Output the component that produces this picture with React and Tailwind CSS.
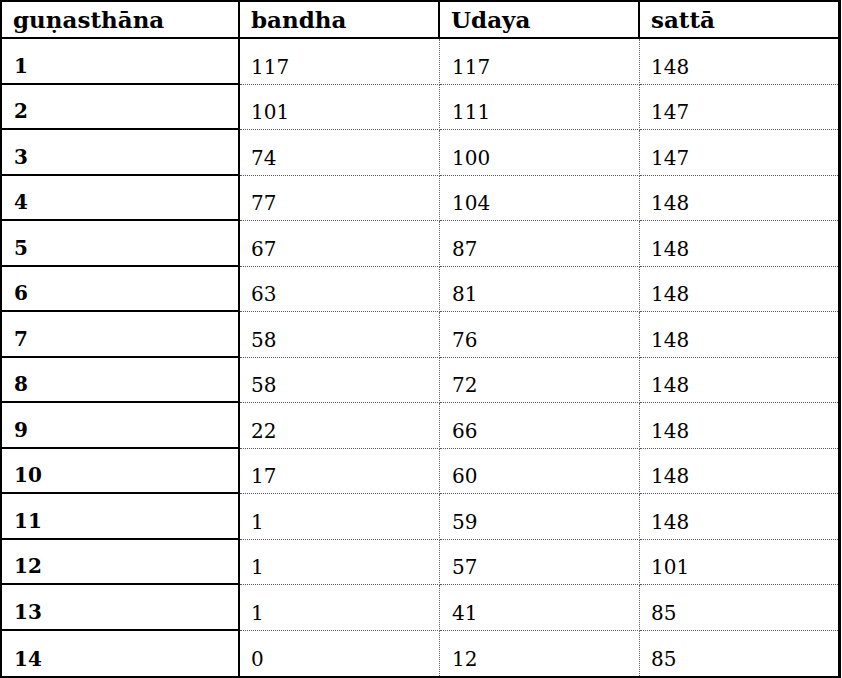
import React from "react";

const rows = [
  ["1", "117", "117", "148"],
  ["2", "101", "111", "147"],
  ["3", "74", "100", "147"],
  ["4", "77", "104", "148"],
  ["5", "67", "87", "148"],
  ["6", "63", "81", "148"],
  ["7", "58", "76", "148"],
  ["8", "58", "72", "148"],
  ["9", "22", "66", "148"],
  ["10", "17", "60", "148"],
  ["11", "1", "59", "148"],
  ["12", "1", "57", "101"],
  ["13", "1", "41", "85"],
  ["14", "0", "12", "85"],
];

const font = { fontFamily: '"DejaVu Serif", serif' };

const App = () => {
  return (
    <div className="w-[842px] h-[678px] bg-white text-black" style={font}>
      <div className="w-[841px] border-l-2 border-t-2 border-r-[3px] border-b-2 border-black">
        {/* header */}
        <div className="flex h-[37px] border-b-2 border-black font-bold text-[23px] leading-none">
          <div className="w-[238px] border-r-2 border-black flex items-end pl-[11px] pb-[6px]">
            guṇasthāna
          </div>
          <div className="w-[200px] border-r-2 border-black flex items-end pl-[11px] pb-[6px]">
            bandha
          </div>
          <div className="w-[200px] border-r-2 border-black flex items-end pl-[11px] pb-[6px]">
            Udaya
          </div>
          <div className="flex-1 flex items-end pl-[11px] pb-[6px]">sattā</div>
        </div>

        {rows.map((r, idx) => {
          const last = idx === rows.length - 1;
          return (
            <div key={r[0]} className="flex h-[45.5px] text-[20px] leading-none">
              <div
                className={`w-[238px] border-r-2 border-black flex items-end pl-[12px] pb-[7px] font-bold ${
                  last ? "" : "border-b-2"
                }`}
              >
                {r[0]}
              </div>
              <div
                className={`w-[200px] border-r border-dotted border-r-[#666] flex items-end pl-[11px] pb-[7px] ${
                  last ? "" : "border-b border-b-[#555]"
                }`}
              >
                {r[1]}
              </div>
              <div
                className={`w-[200px] border-r border-dotted border-r-[#666] flex items-end pl-[12px] pb-[7px] ${
                  last ? "" : "border-b border-b-[#555]"
                }`}
              >
                {r[2]}
              </div>
              <div
                className={`flex-1 border-dotted flex items-end pl-[11px] pb-[7px] ${
                  last ? "" : "border-b border-b-[#555]"
                }`}
              >
                {r[3]}
              </div>
            </div>
          );
        })}
      </div>
    </div>
  );
};

export default App;
